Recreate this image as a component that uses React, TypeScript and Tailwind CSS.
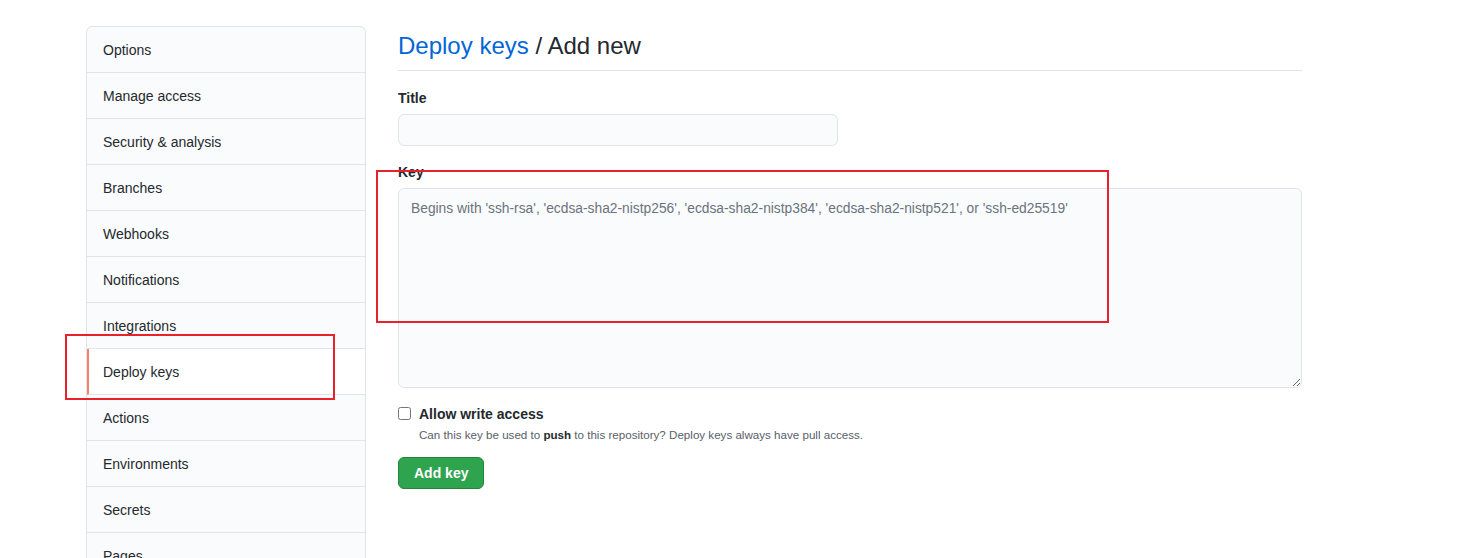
const MENU = [
  'Options',
  'Manage access',
  'Security & analysis',
  'Branches',
  'Webhooks',
  'Notifications',
  'Integrations',
  'Deploy keys',
  'Actions',
  'Environments',
  'Secrets',
  'Pages',
];

function Sidebar() {
  return (
    <nav className="w-[280px] shrink-0 rounded-t-md border border-[#e1e4e8] bg-[#fafbfc]">
      {MENU.map((item) => {
        const active = item === 'Deploy keys';
        return (
          <div
            key={item}
            className={`flex h-[46px] items-center border-b border-[#e1e4e8] pt-[2px] text-[14px] text-[#24292e] ${
              active ? 'border-l-2 border-l-[#f9826c] bg-white pl-[14px]' : 'pl-4'
            }`}
          >
            {item}
          </div>
        );
      })}
    </nav>
  );
}

export default function App() {
  return (
    <div
      className="relative h-[558px] overflow-hidden bg-white text-[#24292e]"
      style={{ fontFamily: '"Liberation Sans", Arial, sans-serif' }}
    >
      <div className="flex gap-8 pl-[86px] pt-[26px]">
        <Sidebar />

        <main className="w-[904px]">
          <div className="border-b border-[#e1e4e8] pb-[9px] pt-[5px]">
            <h1 className="text-[24px] font-normal leading-[30px]">
              <span className="text-[#0366d6]">Deploy keys</span> / Add new
            </h1>
          </div>

          <div className="mt-[17px]">
            <label className="block text-[14px] font-bold leading-[20px]">Title</label>
            <input
              type="text"
              className="mt-[6px] block h-[32px] w-[440px] rounded-md border border-[#e1e4e8] bg-[#fafbfc] px-3 text-[14px] outline-none"
            />
          </div>

          <div className="mt-[16px]">
            <label className="block text-[14px] font-bold leading-[20px]">Key</label>
            <textarea
              className="mt-[6px] block h-[200px] w-[904px] resize-y rounded-md border border-[#e1e4e8] bg-[#fafbfc] px-3 py-[10px] text-[13.8px] leading-[20px] outline-none placeholder:text-[#6a737d]"
              placeholder="Begins with 'ssh-rsa', 'ecdsa-sha2-nistp256', 'ecdsa-sha2-nistp384', 'ecdsa-sha2-nistp521', or 'ssh-ed25519'"
            />
          </div>

          <div className="mt-[16px] flex items-start gap-2">
            <input type="checkbox" className="mt-[3px] h-[13px] w-[13px]" />
            <div>
              <div className="text-[14px] font-bold leading-[20px]">Allow write access</div>
              <div className="mt-[2px] text-[11.6px] leading-[18px] text-[#586069]">
                Can this key be used to <strong className="text-[#24292e]">push</strong> to this repository? Deploy
                keys always have pull access.
              </div>
            </div>
          </div>

          <button className="mt-[13px] h-[32px] rounded-md border border-[#22863a] bg-[#2ea44f] px-[15px] text-[14px] font-bold text-white">
            Add key
          </button>
        </main>
      </div>

      {/* annotation boxes */}
      <div className="pointer-events-none absolute left-[65px] top-[334px] h-[66px] w-[270px] border-2 border-[#e8212b]" />
      <div className="pointer-events-none absolute left-[376px] top-[170px] h-[153px] w-[733px] border-2 border-[#e8212b]" />
    </div>
  );
}
